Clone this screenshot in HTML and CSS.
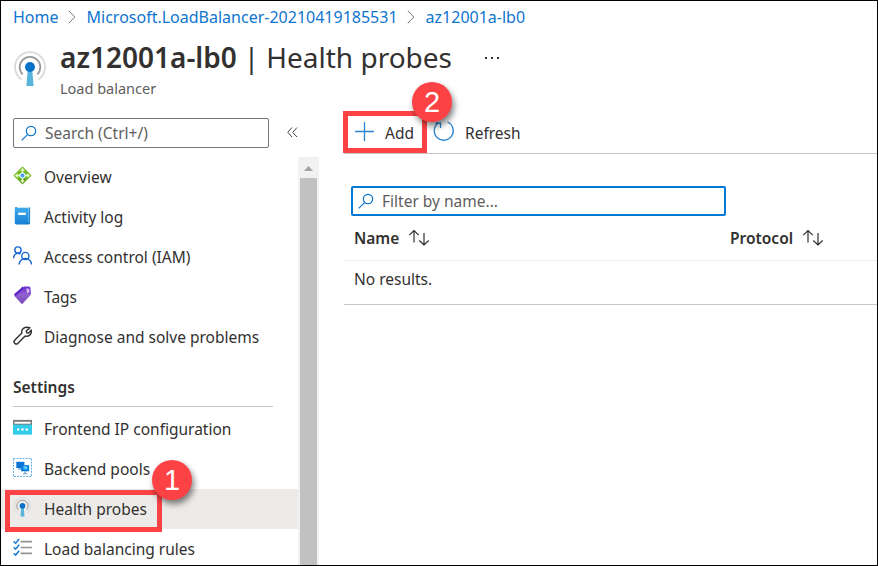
FILE: index.html
```html
<!DOCTYPE html>
<html lang="en">
<head>
<meta charset="utf-8">
<title>az12001a-lb0 | Health probes</title>
<link rel="stylesheet" href="styles.css">
</head>
<body>
<svg width="0" height="0" class="defs" aria-hidden="true">
  <defs>
    <linearGradient id="book" x1="0" y1="0" x2="0" y2="1"><stop offset="0" stop-color="#3fa9ee"/><stop offset="1" stop-color="#1681d2"/></linearGradient>
    <linearGradient id="tag" x1="0" y1="0" x2="0" y2="1"><stop offset="0" stop-color="#6b2ed0"/><stop offset=".45" stop-color="#9360d0"/><stop offset="1" stop-color="#7446b4"/></linearGradient>
    <symbol id="probe" viewBox="0 0 32 36">
      <path d="M7.5 28.5A15 15 0 1 1 24.5 28.5" fill="none" stroke="#dadada" stroke-width="1.8"/>
      <path d="M8.6 23.3A10.3 10.3 0 1 1 23.4 23.3" fill="none" stroke="#999" stroke-width="1.8"/>
      <path d="M13.7 20h4.6l1.3 15h-7.2z" fill="#57b4db"/>
      <circle cx="16" cy="16" r="5" fill="#0872c9"/>
    </symbol>
    <symbol id="search" viewBox="0 0 16 16"><g fill="none" stroke="#0f75d0" stroke-width="1.2"><circle cx="10" cy="6" r="4.7"/><path d="M6.7 9.3.7 15.3"/></g></symbol>
    <symbol id="sort" viewBox="0 0 22 18"><path d="M6 13.5V1.5M1.3 6.2 6 1.5l4.700 4.700M16 4v12M11.300 11.500 16 16l4.700-4.500" fill="none" stroke="#323130" stroke-width="1.200"/></symbol>
    <symbol id="chevron" viewBox="0 0 8 14"><path d="m.8.8 6 6.200-6 6.200" fill="none" stroke="#777" stroke-width="1"/></symbol>
  </defs>
</svg>
<div class="window">
  <nav class="breadcrumb">
    <a class="bc-home">Home</a><svg class="chev"><use href="#chevron"/></svg><a class="bc-lb">Microsoft.LoadBalancer-20210419185531</a><svg class="chev"><use href="#chevron"/></svg><a class="bc-az">az12001a-lb0</a>
  </nav>
  <header class="head">
    <svg class="head-icon"><use href="#probe"/></svg>
    <div>
      <h1><b>az12001a-lb0</b><span class="bar">|</span><span class="page">Health probes</span><svg class="more" width="16" height="4"><g fill="#323130"><rect x="1" y="1" width="2" height="2"/><rect x="7" y="1" width="2" height="2"/><rect x="13" y="1" width="2" height="2"/></g></svg></h1>
      <p class="subtitle">Load balancer</p>
    </div>
  </header>
  <div class="body">
    <aside class="side">
      <div class="side-tools">
        <div class="search"><svg width="16" height="16"><use href="#search"/></svg><span class="t-search">Search (Ctrl+/)</span></div>
        <svg class="collapse" width="11" height="11" viewBox="0 0 11 11"><path d="M5 .5.8 5.300 5 10M10 .5 5.800 5.300 10 10" fill="none" stroke="#444"/></svg>
      </div>
      <div class="side-scroll">
        <ul class="menu">
          <li><svg viewBox="0 0 20 20"><path d="M10 .5 19.500 10 10 19.500.5 10z" fill="#63a51f"/><path d="m10 1 4.500 4.500L10 8 5.500 5.500zM1 10l4.500-4.500L8 10l-2.500 4.500zM19 10l-4.500-4.500L12 10l2.500 4.500z" fill="#80c52b"/><path d="M10 3v14M3 10h14" stroke="#e5f7cf" stroke-width="1.500"/><path d="M10 2 7.800 5h4.400zM10 18l-2.200-3h4.400zM2 10l3-2.200v4.400zM18 10l-3-2.200v4.400z" fill="#e5f7cf"/><circle cx="10" cy="10" r="3.200" fill="#eaf7ff"/><circle cx="10" cy="10" r="2.100" fill="#4b9ff0"/></svg><span class="t-over">Overview</span></li>
          <li><svg viewBox="0 0 20 20"><rect x="2" y="1" width="16" height="18.500" rx="1.500" fill="#1678c5"/><path d="M4 1h13v16.500H4z" fill="#c4e6fb"/><rect x="2" y="2" width="14.500" height="17" rx="1" fill="url(#book)"/><path d="M5.500 7h8v2.500h-8z" fill="#fff"/></svg><span class="t-act">Activity log</span></li>
          <li><svg viewBox="0 0 20 20"><g fill="none" stroke="#1966d2" stroke-width="1.500"><circle cx="5.200" cy="4.200" r="3.300"/><path d="M.8 13v-1.500a4.500 4.500 0 0 1 7-3"/><circle cx="13" cy="10.500" r="3.800"/><path d="M6.500 19.500a6.500 6.500 0 0 1 13 0"/></g></svg><span class="t-iam">Access control (IAM)</span></li>
          <li><svg viewBox="0 0 20 20"><path d="M12 .5h4.500q2 0 2 2L19 9 9.500 19.300 1.500 10.500V8z" fill="url(#tag)"/><path d="M2 10 11 1.500" stroke="#6029c8" stroke-width="2.500"/><path d="M14 3.500q3-1 2.500 2" fill="none" stroke="#e4d5f5" stroke-width="1.200"/><circle cx="15.500" cy="5.800" r="1.200" fill="#eee2ff"/></svg><span class="t-tags">Tags</span></li>
          <li><svg viewBox="0 0 20 20"><path d="M17.800 1.700 14 5.300l.5 1.800 1.800.4 3-3.300c.6 5-3 7.300-6.500 6.400L5 18.400c-1.800 1.800-5.200-1-3.500-3.200L9.300 7.400C8.300 3.300 12 .2 17.800 1.700z" fill="none" stroke="#333" stroke-width="1.500" stroke-linejoin="round"/></svg><span class="t-diag">Diagnose and solve problems</span></li>
        </ul>
        <h2 class="t-set">Settings</h2>
        <ul class="menu settings">
          <li><svg viewBox="0 0 20 20"><path d="M0 2.500h20v15H0z" fill="#31cbeb"/><path d="M0 2h20v5H0z" fill="#7b7b7b"/><path d="M1.500 4h17v2h-17z" fill="#fff"/><g fill="#fff"><circle cx="5.500" cy="12" r="1.300"/><circle cx="10" cy="12" r="1.300"/><circle cx="14.500" cy="12" r="1.300"/></g></svg><span class="t-front">Frontend IP configuration</span></li>
          <li><svg viewBox="0 0 20 20"><rect x=".5" y=".5" width="19" height="19" fill="#fff" stroke="#4ba5e1" stroke-dasharray="2 1.200"/><path d="M3.500 4h8.500v6.500H3.500z" fill="#0b73d6"/><path d="M5.500 10.500h3v2h-3z" fill="#7abdf0"/><path d="M8.500 7.500h8.500V14H8.500z" fill="#087bde"/><path d="M11 8.500h4v3.500h-4z" fill="#53c5f4"/><path d="M12 14h1.500v2H15v1h-4.500v-1H12z" fill="#75a3c9"/></svg><span class="t-back">Backend pools</span></li>
          <li class="selected"><svg class="probe-small"><use href="#probe"/></svg><span class="t-health">Health probes</span><i class="mark mark-one"><b class="badge">1</b></i></li>
          <li><svg viewBox="0 0 20 20"><path d="M8 3.800h12M8 10h12M8 16.200h12" stroke="#949494" stroke-width="1.700"/><path d="m.7 3.500 2.100 2L6.500 1M.7 9.700l2.100 2 3.700-4.500M.7 16l2.100 2 3.700-4.500" fill="none" stroke="#1a7dd7" stroke-width="1.600"/></svg><span class="t-rules">Load balancing rules</span></li>
        </ul>
      </div>
    </aside>
    <div class="scrollbar"><svg width="21" height="21"><path d="M6 14h9l-4.500-5z" fill="#a3a3a3"/></svg><div class="thumb"></div></div>
    <main class="main">
      <div class="toolbar">
        <div class="tool add"><svg width="19" height="19" viewBox="0 0 19 19"><path d="M9.500 0v19M0 9.500h19" stroke="#2984d3" stroke-width="1.300"/></svg><span class="t-add">Add</span><i class="mark mark-two"><b class="badge">2</b></i></div>
        <div class="tool refresh"><svg width="22" height="22" viewBox="0 0 22 22"><path d="M5 3.200A9.500 9.500 0 1 0 14.500 2M2.500 3h5v5" fill="none" stroke="#2984d3" stroke-width="1.300"/></svg><span class="t-ref">Refresh</span></div>
      </div>
      <div class="filter"><svg width="16" height="16"><use href="#search"/></svg><span class="t-filter">Filter by name...</span></div>
      <div class="thead"><div class="th"><span class="t-name">Name</span><svg width="22" height="18"><use href="#sort"/></svg></div><div class="th"><span class="t-prot">Protocol</span><svg width="22" height="18"><use href="#sort"/></svg></div></div>
      <div class="empty"><span class="t-none">No results.</span></div>
    </main>
  </div>
</div>
</body>
</html>
```
FILE: styles.css
```css
* { box-sizing: border-box; margin: 0; padding: 0; }
body { width: 878px; height: 566px; overflow: hidden; background: #fff; color: #323130; font-family: "Noto Sans", "Open Sans", sans-serif; font-size: 15.5px; line-height: 20px; white-space: nowrap; }
svg { display: block; flex: none; }
.defs { position: absolute; }
.window { width: 878px; height: 566px; border: 1px solid #000; overflow: hidden; display: flex; flex-direction: column; }
.breadcrumb { display: flex; align-items: center; height: 32px; padding-left: 12px; color: #0f75d0; font-size: 16px; }
.chev { width: 8px; height: 14px; margin: 0 11px 0 9px; }
.head { display: flex; height: 78px; padding-left: 13px; }
.head-icon { width: 32px; height: 36px; margin: 18px 14px 0 0; }
h1 { display: flex; align-items: center; height: 48px; font-weight: 400; font-size: 28px; line-height: 40px; }
h1 b { font-weight: 600; }
.bar { margin: 0 7px; }
.more { margin: 2px 0 0 32px; }
.subtitle { margin-top: -3px; font-size: 14.5px; color: #605e5c; }
.body { flex: 1; display: flex; min-height: 0; }
.side { width: 297px; display: flex; flex-direction: column; }
.side-tools { display: flex; align-items: center; height: 46px; padding: 0 0 3px 12px; }
.search { display: flex; align-items: center; width: 263px; height: 30px; border: 1px solid #767676; border-radius: 2px; padding-left: 7px; gap: 8px; color: #605e5c; }
.collapse { margin-left: 18px; }
.side-scroll { flex: 1; overflow: hidden; }
.menu { list-style: none; }
.menu li { position: relative; display: flex; align-items: center; height: 40px; padding-left: 12px; }
.menu li > svg { width: 19px; height: 19px; margin: -4px 12px 0 0; }
.menu li .probe-small { height: 20px; }
h2 { font-size: 15.5px; font-weight: 600; line-height: 20px; height: 49px; margin: 1px 25px 0 12px; padding-top: 19px; border-bottom: 1px solid #c8c6c4; }
.settings { padding-top: 2px; }
.selected { background: #edebe9; }
.mark { position: absolute; border: 5px solid #fd4245; font-style: normal; z-index: 2; }
.mark-one { left: 4px; top: 1px; width: 157px; height: 42px; }
.mark-two { left: -1px; top: 0; width: 84px; height: 42px; }
.badge { position: absolute; display: block; width: 40px; height: 40px; border-radius: 50%; background: #fd4245; color: #fff; font: 400 29px/40px "Liberation Sans", sans-serif; text-align: center; box-shadow: 2px 4px 6px rgba(0,0,0,.5); }
.mark-one .badge { left: 142px; top: -35px; }
.mark-two .badge { left: 64px; top: -34px; }
.scrollbar { width: 21px; margin-top: 46px; background: #f1f1f1; }
.thumb { height: 400px; margin: 0 2px; background: #c1c1c1; }
.main { flex: 1; margin-left: 25px; }
.toolbar { display: flex; height: 43px; border-bottom: 1px solid #c8c6c4; }
.tool { position: relative; display: flex; align-items: center; height: 42px; padding-top: 1px; }
.add { width: 89px; padding-left: 11px; gap: 11px; }
.add > svg { margin-top: -3px; }
.refresh { gap: 10px; }
.refresh > svg { margin-top: -3px; }
.filter { display: flex; align-items: center; width: 375px; height: 30px; margin: 32px 0 0 7px; padding-left: 5px; gap: 8px; border: 2px solid #0078d4; border-radius: 2px; color: #605e5c; }
.thead { display: grid; grid-template-columns: 376px 1fr; height: 45px; border-bottom: 1px solid #edebe9; padding-left: 10px; font-weight: 600; }
.th { display: flex; gap: 9px; align-items: center; }
.empty { height: 44px; border-bottom: 1px solid #c8c6c4; padding: 8px 0 0 10px; }
```
